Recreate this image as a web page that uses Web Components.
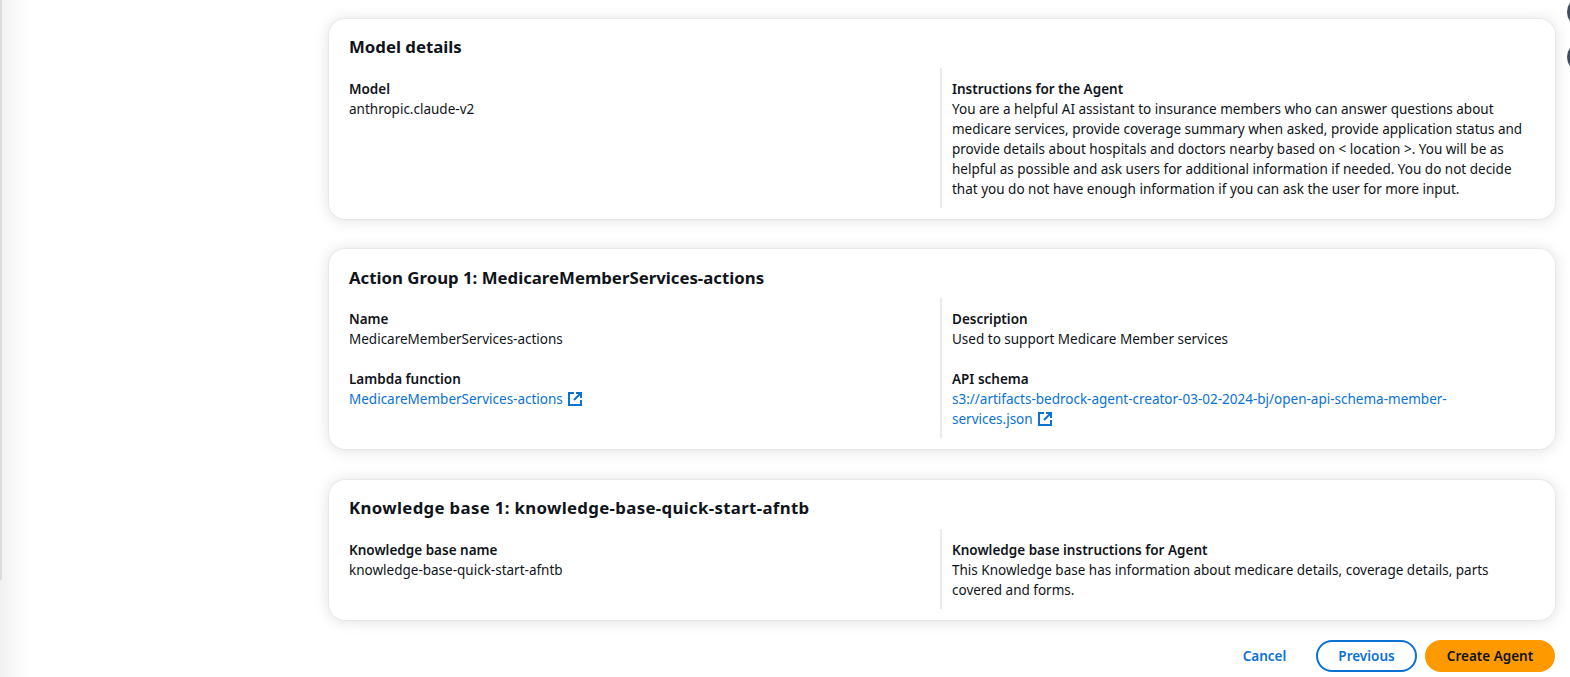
<!DOCTYPE html>
<html>
<head>
<meta charset="utf-8">
<style>
  html, body { margin: 0; height: 100%; overflow: hidden; background: #fff; }
  body { font-family: "Noto Sans", "Liberation Sans", sans-serif; color: #0f141a; }
</style>
</head>
<body>
<review-page>
  <detail-card heading="Model details">
    <detail-item label="Model">anthropic.claude-v2</detail-item>
    <detail-item slot="right" label="Instructions for the Agent">You are a helpful AI assistant to insurance members who can answer questions about medicare services, provide coverage summary when asked, provide application status and provide details about hospitals and doctors nearby based on &lt; location &gt;. You will be as helpful as possible and ask users for additional information if needed. You do not decide that you do not have enough information if you can ask the user for more input.</detail-item>
  </detail-card>
  <detail-card heading="Action Group 1: MedicareMemberServices-actions">
    <detail-item label="Name">MedicareMemberServices-actions</detail-item>
    <detail-item label="Lambda function"><ext-link>MedicareMemberServices-actions</ext-link></detail-item>
    <detail-item slot="right" label="Description">Used to support Medicare Member services</detail-item>
    <detail-item slot="right" label="API schema"><ext-link>s3://artifacts-bedrock-agent-creator-03-02-2024-bj/open-api-schema-member-services.json</ext-link></detail-item>
  </detail-card>
  <detail-card heading="Knowledge base 1: knowledge-base-quick-start-afntb" style="--heading-spacing: 0.34px">
    <detail-item label="Knowledge base name">knowledge-base-quick-start-afntb</detail-item>
    <detail-item slot="right" label="Knowledge base instructions for Agent">This Knowledge base has information about medicare details, coverage details, parts covered and forms.</detail-item>
  </detail-card>
  <wizard-actions></wizard-actions>
</review-page>

<script>
class ReviewPage extends HTMLElement {
  constructor() {
    super();
    this.attachShadow({ mode: "open" }).innerHTML = `
    <style>
      :host {
        display: flex;
        height: 677px;
        box-sizing: border-box;
        overflow: hidden;
        position: relative;
      }
      .rail {
        width: 30px;
        flex: none;
        background: linear-gradient(to right, #f1f1f1, #fff);
      }
      .rail div {
        width: 2px;
        height: 580px;
        background: #dcdcdc;
      }
      .main {
        flex: 1;
        padding: 18.75px 15px 0 299px;
        display: flex;
        flex-direction: column;
        gap: 30.5px;
        min-width: 0;
      }
      .dot {
        position: absolute;
        right: -29px;
        width: 32px;
        height: 32px;
        border-radius: 50%;
        background: #414d5c;
      }
    </style>
    <div class="rail"><div></div></div>
    <div class="main"><slot></slot></div>
    <div class="dot" style="top:-4px"></div>
    <div class="dot" style="top:41px"></div>`;
  }
}

class DetailCard extends HTMLElement {
  constructor() {
    super();
    this.attachShadow({ mode: "open" }).innerHTML = `
    <style>
      :host {
        display: block;
        background: #fff;
        border-radius: 16px;
        box-shadow: 0 0 1px 1px rgba(0, 28, 36, 0.04), 0 1px 14px 2px rgba(0, 7, 22, 0.1);
        padding: 17.500px 24px 11px 20px;
      }
      h2 {
        margin: 0 0 9.500px;
        font-size: 16.800px;
        line-height: 22px;
        font-weight: 700;
        letter-spacing: var(--heading-spacing, 0);
      }
      .cols {
        display: grid;
        grid-template-columns: 1fr 1fr;
      }
      .col {
        display: flex;
        flex-direction: column;
        gap: 20px;
        padding: 11px 0 9px;
      }
      .col.right {
        border-left: 2px solid #e9ebed;
        padding-left: 10px;
        padding-right: 6px;
      }
    </style>
    <h2></h2>
    <div class="cols">
      <div class="col"><slot></slot></div>
      <div class="col right"><slot name="right"></slot></div>
    </div>`;
    this.shadowRoot.querySelector("h2").textContent = this.getAttribute("heading");
  }
}

class DetailItem extends HTMLElement {
  constructor() {
    super();
    this.attachShadow({ mode: "open" }).innerHTML = `
    <style>
      :host { display: block; font-size: 13.500px; line-height: 20px; }
      .label { font-weight: 600; }
    </style>
    <div class="label"></div>
    <div><slot></slot></div>`;
    this.shadowRoot.querySelector(".label").textContent = this.getAttribute("label");
  }
}

class ExtLink extends HTMLElement {
  constructor() {
    super();
    this.attachShadow({ mode: "open" }).innerHTML = `
    <style>
      :host { color: #0972d3; }
      svg { width: 16px; height: 16px; vertical-align: -3px; margin-left: 4px; }
    </style>
    <slot></slot><svg viewBox="0 0 16 16" fill="none" stroke="#0972d3" stroke-width="2"><path d="M14 9v5H2V2h5"/><path d="M9 2h5v5"/><path d="M14 2 7 9"/></svg>`;
  }
}

class WizardActions extends HTMLElement {
  constructor() {
    super();
    this.attachShadow({ mode: "open" }).innerHTML = `
    <style>
      :host {
        display: flex;
        justify-content: flex-end;
        align-items: center;
        gap: 8px;
        margin-top: -10.500px;
      }
      button {
        font: 600 13.500px/20px "Noto Sans", "Liberation Sans", sans-serif;
        height: 32px;
        border-radius: 20px;
        padding: 0;
        background: none;
        border: 2px solid transparent;
        color: #0972d3;
      }
      .link { width: 75px; margin-right: 6px; }
      .normal { border-color: #0972d3; width: 101px; }
      .primary { background: #ff9900; border-color: #ff9900; color: #0f141a; width: 130px; }
    </style>
    <button class="link">Cancel</button>
    <button class="normal">Previous</button>
    <button class="primary">Create Agent</button>`;
  }
}

customElements.define("review-page", ReviewPage);
customElements.define("detail-card", DetailCard);
customElements.define("detail-item", DetailItem);
customElements.define("ext-link", ExtLink);
customElements.define("wizard-actions", WizardActions);
</script>
</body>
</html>
